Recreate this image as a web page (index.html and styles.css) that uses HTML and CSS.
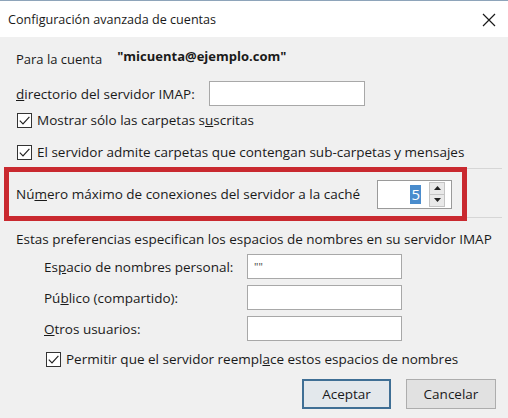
FILE: index.html
```html
<!DOCTYPE html>
<html lang="es">
<head>
<meta charset="utf-8">
<title>Configuración avanzada de cuentas</title>
<link rel="stylesheet" href="styles.css">
</head>
<body>
<div class="dialog">
  <div class="titlebar">
    <span class="title">Configuración avanzada de cuentas</span>
    <svg class="close" width="14" height="14" viewBox="0 0 14 14"><path d="M1 1L13 13M13 1L1 13" stroke="#1a1a1a" stroke-width="1.2" fill="none"/></svg>
  </div>
  <div class="content">
    <div class="account">
      <span class="acc-label">Para la cuenta</span>
      <span class="email">"micuenta@ejemplo.com"</span>
    </div>
    <div class="row dir">
      <span class="dir-label"><u>d</u>irectorio del servidor IMAP:</span>
      <span class="field dir-field"></span>
    </div>
    <div class="check c1">
      <span class="box"><svg width="13" height="13" viewBox="0 0 13 13"><path d="M1.8 6.6L5 9.8L11.4 2.8" stroke="#222" stroke-width="1.2" fill="none"/></svg></span>
      <span>Mostrar sólo las carpetas s<u>u</u>scritas</span>
    </div>
    <div class="check c2">
      <span class="box"><svg width="13" height="13" viewBox="0 0 13 13"><path d="M1.8 6.6L5 9.8L11.4 2.8" stroke="#222" stroke-width="1.2" fill="none"/></svg></span>
      <span>El servidor admite carpetas que contengan sub-carpetas y mensajes</span>
    </div>
    <div class="conn">
      <span class="conn-label">Nú<u>m</u>ero máximo de conexiones del servidor a la caché</span>
      <span class="spin">
        <span class="spin-val"><span class="sel">5</span></span>
        <span class="spin-btns">
          <span class="up"><svg width="7" height="4" viewBox="0 0 7 4"><path d="M0 4L3.5 0L7 4Z" fill="#222"/></svg></span>
          <span class="down"><svg width="7" height="4" viewBox="0 0 7 4"><path d="M0 0L3.5 4L7 0Z" fill="#222"/></svg></span>
        </span>
      </span>
      <span class="highlight"></span>
    </div>
    <div class="prefs">Estas preferencias especifican los espacios de nombres en su servidor IMAP</div>
    <div class="ns-grid">
      <span>Es<u>p</u>acio de nombres personal:</span>
      <span class="field ns-field"><span class="quote">""</span></span>
      <span>Pú<u>b</u>lico (compartido):</span>
      <span class="field ns-field"></span>
      <span><u>O</u>tros usuarios:</span>
      <span class="field ns-field"></span>
    </div>
    <div class="check c3">
      <span class="box"><svg width="13" height="13" viewBox="0 0 13 13"><path d="M1.8 6.6L5 9.8L11.4 2.8" stroke="#222" stroke-width="1.2" fill="none"/></svg></span>
      <span>Permitir que el servidor reempl<u>a</u>ce estos espacios de nombres</span>
    </div>
    <div class="buttons">
      <span class="btn default">Aceptar</span>
      <span class="btn">Cancelar</span>
    </div>
  </div>
</div>
</body>
</html>
```
FILE: styles.css
```css
html, body {
  margin: 0;
  padding: 0;
}
body {
  width: 508px;
  height: 418px;
  overflow: hidden;
  font-family: "Open Sans", "Noto Sans", sans-serif;
  font-size: 13.5px;
  color: #1a1a1a;
}
.dialog {
  width: 508px;
  height: 418px;
  background: #f0f0f0;
  display: flex;
  flex-direction: column;
}
.titlebar {
  height: 36px;
  background: #fff;
  border-top: 1px solid #8ea4ba;
  display: flex;
  align-items: center;
  justify-content: space-between;
  padding: 0 12px 0 8px;
  flex-shrink: 0;
}
.title {
  font-size: 12.6px;
  color: #1a1a1a;
  margin-top: 1px;
}
.close {
  display: block;
  margin-top: 1px;
}
.content {
  padding: 12px 0 0 16px;
  display: flex;
  flex-direction: column;
  line-height: 20px;
}
.account {
  display: flex;
  align-items: flex-start;
  height: 20px;
}
.acc-label {
  font-size: 13px;
}
.email {
  font-weight: bold;
  font-size: 13px;
  margin-left: 15px;
  margin-top: -3px;
}
.row {
  display: flex;
  align-items: center;
}
.dir {
  margin-top: 12px;
  height: 25px;
}
.dir-label {
  width: 193px;
  flex-shrink: 0;
}
.field {
  display: block;
  background: #fff;
  border: 1px solid #a8a8a8;
  box-sizing: border-box;
}
.dir-field {
  width: 156px;
  height: 25px;
}
.check {
  display: flex;
  align-items: center;
  height: 20px;
}
.box {
  width: 15px;
  height: 15px;
  box-sizing: border-box;
  border: 1px solid #333;
  background: #fff;
  display: flex;
  align-items: center;
  justify-content: center;
  margin-right: 5px;
  flex-shrink: 0;
}
.box svg {
  display: block;
}
.c1 {
  margin-top: 4px;
  margin-left: 1px;
}
.c2 {
  margin-top: 12px;
  margin-left: 1px;
}
.conn {
  position: relative;
  margin: 6px 6px 0 -11px;
  padding: 2px 0 0 11px;
  height: 46px;
  box-sizing: content-box;
  border-top: 1px solid #d6d6d6;
  border-bottom: 1px solid #d6d6d6;
  display: flex;
  align-items: center;
}
.conn-label {
  width: 361px;
  flex-shrink: 0;
  white-space: nowrap;
}
.spin {
  width: 75px;
  height: 29px;
  box-sizing: border-box;
  border: 1px solid #9a9a9a;
  background: #fff;
  display: flex;
  align-items: center;
  justify-content: flex-end;
  padding-right: 6px;
}
.spin-val {
  display: flex;
  align-items: center;
  margin-right: 8px;
}
.sel {
  background: #4a8ccd;
  color: #fff;
  font-size: 15px;
  line-height: 19px;
  padding: 0 1px;
}
.spin-btns {
  width: 14px;
  height: 23px;
  display: flex;
  flex-direction: column;
  border: 1px solid #c4c4c4;
  background: #e9e9e9;
}
.spin-btns span {
  flex: 1;
  display: flex;
  align-items: center;
  justify-content: center;
}
.spin-btns .up {
  border-bottom: 1px solid #c4c4c4;
}
.spin-btns svg {
  display: block;
}
.highlight {
  position: absolute;
  left: -1px;
  top: -2px;
  width: 463px;
  height: 54px;
  box-sizing: border-box;
  border: 5px solid #c9292f;
  pointer-events: none;
}
.prefs {
  margin-top: 11px;
  height: 20px;
  white-space: nowrap;
}
.ns-grid {
  margin-top: 5px;
  padding-left: 28px;
  display: grid;
  grid-template-columns: 203px 155px;
  grid-auto-rows: 25px;
  row-gap: 6px;
  align-items: center;
}
.ns-field {
  height: 25px;
  display: flex;
  align-items: center;
  padding-left: 6px;
}
.quote {
  font-size: 11px;
  color: #444;
}
.c3 {
  margin-top: 8px;
  margin-left: 30px;
  white-space: nowrap;
}
.buttons {
  margin-top: 10px;
  display: flex;
  justify-content: flex-end;
  gap: 15px;
  padding-right: 12px;
}
.btn {
  width: 90px;
  height: 30px;
  box-sizing: border-box;
  border: 1px solid #adadad;
  background: #e1e1e1;
  display: flex;
  align-items: center;
  justify-content: center;
  font-size: 13.5px;
}
.btn.default {
  width: 89px;
  border: 2px solid #3f6f95;
  background: #e3e8ec;
}
```
